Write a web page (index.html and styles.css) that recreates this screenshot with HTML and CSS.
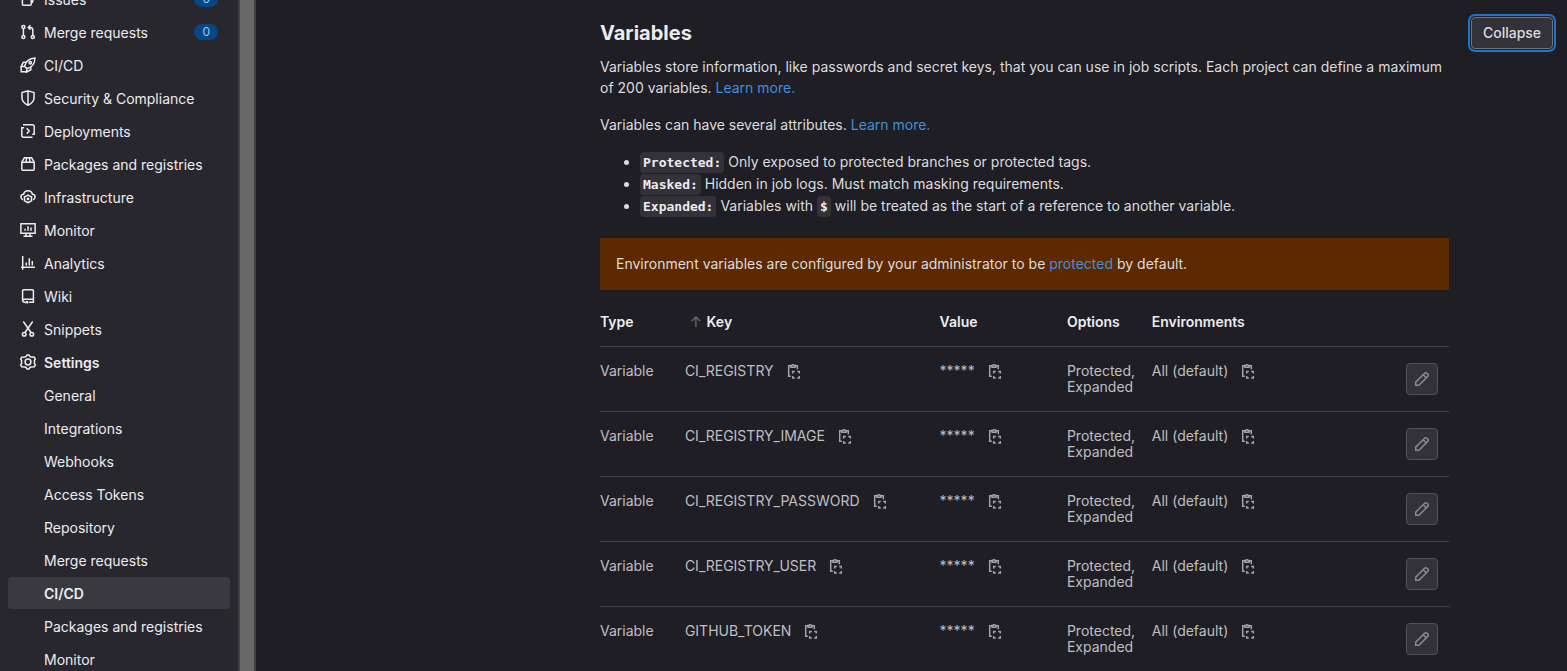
FILE: index.html
```html
<!DOCTYPE html>
<html lang="en">
<head>
<meta charset="utf-8">
<title>CI/CD Settings</title>
<link rel="stylesheet" href="styles.css">
</head>
<body>
<svg class="sprite" aria-hidden="true">
  <symbol id="copy" viewBox="0 0 16 16"><path d="M4.5 2.7H2.7v10.6h2.1M9 2.7h2.3v3.6M5 4.3V2.5h.8a1.3 1.3 0 0 1 2.4 0H9v1.8z"/><path d="M6.7 10.6V8.5h2.1M11.2 8.5h2.1v2.1M13.3 12.9V15h-2.1M8.8 15H6.7v-2.1"/></symbol>
  <symbol id="pencil" viewBox="0 0 16 16"><path d="M1.7 14.3v-3.2l8.9-8.9a1.6 1.6 0 0 1 2.3 0l.9.9a1.6 1.6 0 0 1 0 2.3l-8.9 8.9zM9.3 3.9l2.8 2.8"/></symbol>
</svg>
<div class="app">
  <nav class="sidebar" aria-label="Project">
    <ul class="menu">
      <li><a href="#"><svg class="icon" viewBox="0 0 16 16"><path d="M10.2 1.8H3.4a1 1 0 0 0-1 1v10.4a1 1 0 0 0 1 1h6.8a1 1 0 0 0 1-1V2.8a1 1 0 0 0-1-1zM11.5 4l1.7.5a1 1 0 0 1 .7 1.2l-1.7 6.3"/></svg>Issues<span class="badge">0</span></a></li>
      <li><a href="#"><svg class="icon" viewBox="0 0 16 16"><circle cx="3.4" cy="2.9" r="1.5"/><circle cx="3.4" cy="12.9" r="1.5"/><circle cx="12.8" cy="12.9" r="1.5"/><path d="M3.4 4.4v7M12.8 11.4V6a2.6 2.6 0 0 0-2.6-2.6H8.5M10.4 1.2 8.2 3.4l2.2 2.2"/></svg>Merge requests<span class="badge">0</span></a></li>
      <li><a href="#"><svg class="icon" viewBox="0 0 16 16"><path d="M4.5 9.2C5.5 5.2 8.5 1.4 15 1c-.2 6.2-3.8 9.6-8 10.6zM5.8 5.3H3.3L1 9.7l3.5-.5M10.8 10.2v2.5L6.3 15.2l.7-3.6M1.2 9.7v5.1h4.9"/><circle cx="10.3" cy="5.7" r="1.2"/></svg>CI/CD</a></li>
      <li><a href="#"><svg class="icon" viewBox="0 0 16 16"><path d="M8 .9 14 2.5v5.2c0 4-2.8 6-6 7.5-3.2-1.5-6-3.5-6-7.5V2.5zM8 1v14"/></svg>Security &amp; Compliance</a></li>
      <li><a href="#"><svg class="icon" viewBox="0 0 16 16"><path d="M3 1.7h9.2a2 2 0 0 1 2 2v7.5h-2M12.5 14.3H3.8a2 2 0 0 1-2-2V4.8h2.4M6.7 5.4 9.3 8l-2.6 2.6"/></svg>Deployments</a></li>
      <li><a href="#"><svg class="icon" viewBox="0 0 16 16"><path d="M1.8 6.2 4.4 1.8h7.2l2.6 4.4v7.1a1 1 0 0 1-1 1H2.8a1 1 0 0 1-1-1zM1.8 6.2h12.4M6.6 2 6 6M9.4 2l.6 4"/></svg>Packages and registries</a></li>
      <li><a href="#"><svg class="icon" viewBox="0 0 16 16"><path d="M3 10.7A3 3 0 0 1 .9 8a2.9 2.9 0 0 1 2.7-2.8A4.6 4.6 0 0 1 8 1.8a4.6 4.6 0 0 1 4.4 3.4A2.9 2.9 0 0 1 15.1 8a3 3 0 0 1-2.1 2.7M8 6l1.2.9 2.3.9v4L9.2 13l-1.2.9L6.8 13l-2.3-1.2v-4l2.3-.9z"/><circle class="solid" cx="8" cy="9.9" r="1.4"/></svg>Infrastructure</a></li>
      <li><a href="#"><svg class="icon" viewBox="0 0 16 16"><path d="M.9 1.8h14.2v9.4H.9zM3.5 14.3h9M6 11.5v2.6M10 11.5v2.6M5 6.8v2M8 4.2v4.6M11 5.6v3.2"/></svg>Monitor</a></li>
      <li><a href="#"><svg class="icon" viewBox="0 0 16 16"><path d="M2.7 1v13.8M1 12.3h14M6.3 7.5v3M9.3 3.3v7.2M12.3 6v4.5"/></svg>Analytics</a></li>
      <li><a href="#"><svg class="icon" viewBox="0 0 16 16"><path d="M5.5 14.2H4.3a1.7 1.7 0 0 1-1.7-1.7V2.8a1 1 0 0 1 1-1h8.8a1 1 0 0 1 1 1v11.4H8.8M2.8 12.5a1.7 1.7 0 0 1 1.5-1.3h9.1"/><path class="solid" d="M5.5 13h2.6v3L6.8 15l-1.3 1z"/></svg>Wiki</a></li>
      <li><a href="#"><svg class="icon" viewBox="0 0 16 16"><circle cx="4.2" cy="13.2" r="1.8"/><circle cx="11.8" cy="13.2" r="1.8"/><path d="M3.3.5 11 11.5M12.7.5 5 11.5"/></svg>Snippets</a></li>
      <li class="open"><a href="#"><svg class="icon" viewBox="0 0 16 16"><path d="M6.2 2.3 7 .9h2l.8 1.4 1.2.7h1.7l1.6.2 1 1.8-.9 1.5v2.9l.9 1.5-1 1.8-3.3.3-1.2.6-.8 1.5H7l-.8-1.5-1.2-.6-3.3-.3-1-1.8.9-1.5V6.5L.7 5l1-1.8L5 3z"/><circle cx="8" cy="8" r="2.9"/></svg>Settings</a></li>
      <li class="sub"><a href="#">General</a></li>
      <li class="sub"><a href="#">Integrations</a></li>
      <li class="sub"><a href="#">Webhooks</a></li>
      <li class="sub"><a href="#">Access Tokens</a></li>
      <li class="sub"><a href="#">Repository</a></li>
      <li class="sub"><a href="#">Merge requests</a></li>
      <li class="sub current"><a href="#" aria-current="page">CI/CD</a></li>
      <li class="sub"><a href="#">Packages and registries</a></li>
      <li class="sub"><a href="#">Monitor</a></li>
    </ul>
  </nav>
  <div class="track"></div>
  <main class="main">
    <section class="settings">
      <h2>Variables</h2>
      <p>Variables store information, like passwords and secret keys, that you can use in job scripts. Each project can define a maximum of 200 variables. <a href="#">Learn more.</a></p>
      <p>Variables can have several attributes. <a href="#">Learn more.</a></p>
      <ul class="attributes">
        <li><code>Protected:</code> Only exposed to protected branches or protected tags.</li>
        <li><code>Masked:</code> Hidden in job logs. Must match masking requirements.</li>
        <li><code>Expanded:</code> Variables with <code>$</code> will be treated as the start of a reference to another variable.</li>
      </ul>
      <div class="notice">Environment variables are configured by your administrator to be <a href="#">protected</a> by default.</div>
      <table class="variables">
        <colgroup><col class="c10"><col class="c30"><col class="c15"><col class="c10"><col class="c20"><col class="c15"></colgroup>
        <thead>
          <tr><th>Type</th><th class="sorted"><span class="arrow">↑</span>Key</th><th>Value</th><th>Options</th><th>Environments</th><th aria-label="Actions"></th></tr>
        </thead>
        <tbody>
          <tr><td>Variable</td><td><div class="cell">CI_REGISTRY<button class="copy" aria-label="Copy key"><svg><use href="#copy"/></svg></button></div></td><td><div class="cell">*****<button class="copy" aria-label="Copy value"><svg><use href="#copy"/></svg></button></div></td><td>Protected, Expanded</td><td><div class="cell">All (default)<button class="copy" aria-label="Copy environment"><svg><use href="#copy"/></svg></button></div></td><td><button class="edit" aria-label="Edit"><svg><use href="#pencil"/></svg></button></td></tr>
          <tr><td>Variable</td><td><div class="cell">CI_REGISTRY_IMAGE<button class="copy" aria-label="Copy key"><svg><use href="#copy"/></svg></button></div></td><td><div class="cell">*****<button class="copy" aria-label="Copy value"><svg><use href="#copy"/></svg></button></div></td><td>Protected, Expanded</td><td><div class="cell">All (default)<button class="copy" aria-label="Copy environment"><svg><use href="#copy"/></svg></button></div></td><td><button class="edit" aria-label="Edit"><svg><use href="#pencil"/></svg></button></td></tr>
          <tr><td>Variable</td><td><div class="cell">CI_REGISTRY_PASSWORD<button class="copy" aria-label="Copy key"><svg><use href="#copy"/></svg></button></div></td><td><div class="cell">*****<button class="copy" aria-label="Copy value"><svg><use href="#copy"/></svg></button></div></td><td>Protected, Expanded</td><td><div class="cell">All (default)<button class="copy" aria-label="Copy environment"><svg><use href="#copy"/></svg></button></div></td><td><button class="edit" aria-label="Edit"><svg><use href="#pencil"/></svg></button></td></tr>
          <tr><td>Variable</td><td><div class="cell">CI_REGISTRY_USER<button class="copy" aria-label="Copy key"><svg><use href="#copy"/></svg></button></div></td><td><div class="cell">*****<button class="copy" aria-label="Copy value"><svg><use href="#copy"/></svg></button></div></td><td>Protected, Expanded</td><td><div class="cell">All (default)<button class="copy" aria-label="Copy environment"><svg><use href="#copy"/></svg></button></div></td><td><button class="edit" aria-label="Edit"><svg><use href="#pencil"/></svg></button></td></tr>
          <tr><td>Variable</td><td><div class="cell">GITHUB_TOKEN<button class="copy" aria-label="Copy key"><svg><use href="#copy"/></svg></button></div></td><td><div class="cell">*****<button class="copy" aria-label="Copy value"><svg><use href="#copy"/></svg></button></div></td><td>Protected, Expanded</td><td><div class="cell">All (default)<button class="copy" aria-label="Copy environment"><svg><use href="#copy"/></svg></button></div></td><td><button class="edit" aria-label="Edit"><svg><use href="#pencil"/></svg></button></td></tr>
        </tbody>
      </table>
    </section>
    <button class="collapse">Collapse</button>
  </main>
</div>
</body>
</html>
```
FILE: styles.css
```css
* { box-sizing: border-box; }

body {
  margin: 0;
  background: #1f1e24;
  color: #dcdcde;
  font: 14px/20px Inter, "Liberation Sans", sans-serif;
}

svg {
  fill: none;
  stroke: currentColor;
  stroke-width: 1.5;
}

.sprite { display: none; }
.solid { fill: currentColor; stroke: none; }

a { color: #428fdc; text-decoration: none; }

button {
  font: inherit;
  color: inherit;
  cursor: pointer;
}

.app {
  display: flex;
  height: 100vh;
  overflow: hidden;
}

.sidebar {
  flex: none;
  width: 238px;
  padding: 0 8px;
  background: #28272d;
}

.menu {
  display: flex;
  flex-direction: column;
  gap: 1px;
  margin: -17px 0 0;
  padding: 0;
  list-style: none;
}

.menu a {
  display: flex;
  align-items: center;
  gap: 8px;
  height: 32px;
  padding: 2px 12px 0;
  border-radius: 4px;
  color: #ececef;
}

.menu .sub a { padding-left: 36px; }
.menu .open a, .menu .current a { font-weight: 600; }
.menu .current a { background: #3a393f; }

.icon {
  width: 16px;
  height: 16px;
  margin-bottom: 2px;
}

.badge {
  margin: 0 0 2px auto;
  padding: 0 8px;
  border-radius: 8px;
  background: #064787;
  color: #9dc7f1;
  font-size: 12px;
  line-height: 16px;
}

.track {
  flex: none;
  width: 18px;
  background: #686868;
  border: solid #424242;
  border-width: 0 2px;
}

.main {
  flex: 1;
  display: grid;
  grid-template-columns: minmax(0, 1fr) 82px;
  gap: 22px;
  align-items: start;
  padding: 17px 14px 0 344px;
}

h2 {
  margin: 0 0 7px;
  font-size: 20px;
  line-height: 32px;
  font-weight: 700;
  color: #ececef;
}

p { margin: 0 0 16px; line-height: 21px; }

.attributes {
  margin: 0 0 21px;
  padding-left: 40px;
  line-height: 22px;
}

code {
  padding: 3px;
  border-radius: 4px;
  background: #333238;
  color: #ececef;
  font: bold 13px/16px "DejaVu Sans Mono", monospace;
}

.notice {
  padding: 16px;
  background: #5c2900;
}

.variables {
  width: 100%;
  margin-top: 8px;
  table-layout: fixed;
  border-collapse: collapse;
  line-height: 16px;
}

.c10 { width: 10%; }
.c15 { width: 15%; }
.c20 { width: 20%; }
.c30 { width: 30%; }

th, td {
  padding: 16px 0;
  border-bottom: 1px solid #434248;
  text-align: left;
  vertical-align: top;
}

th { font-weight: 600; color: #ececef; }
td { color: #bfbfc3; }
td:last-child { padding-right: 11px; text-align: right; }

.sorted { padding-left: 5px; }
.arrow { margin-right: 5px; font-weight: 400; color: #737278; }

.cell { display: flex; align-items: center; gap: 12px; }

.copy {
  width: 16px;
  height: 16px;
  padding: 0;
  border: 0;
  background: none;
  color: #a4a3a8;
}

.copy svg, .edit svg { display: block; width: 16px; height: 16px; }

.edit {
  width: 32px;
  height: 32px;
  padding: 7px;
  border: 1px solid #535158;
  border-radius: 4px;
  background: #333238;
  color: #89888d;
  vertical-align: top;
}

.collapse {
  height: 32px;
  padding: 0;
  border: 1px solid #737278;
  border-radius: 4px;
  background: #333238;
  box-shadow: 0 0 0 1px #1f1e24, 0 0 0 3px #1f75cb;
  font-weight: 500;
}
```
